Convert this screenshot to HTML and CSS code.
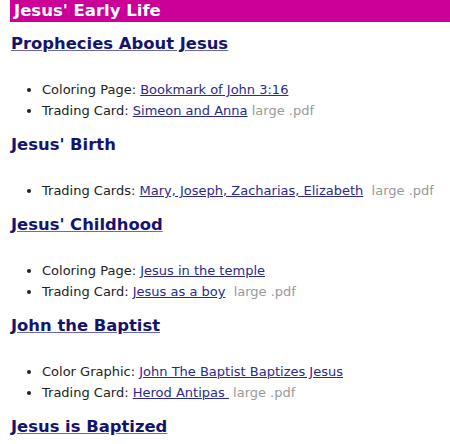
FILE: index.html
```html
<!DOCTYPE html>
<html>
<head>
<meta charset="utf-8">
<link rel="stylesheet" href="styles.css">
</head>
<body>
<div class="page">
  <div class="banner">Jesus' Early Life</div>

  <h2 class="topic first"><a href="#">Prophecies About Jesus</a></h2>
  <ul class="items">
    <li>Coloring Page: <a href="#">Bookmark of John 3:16</a></li>
    <li>Trading Card: <a href="#">Simeon and Anna</a> <span class="note">large .pdf</span></li>
  </ul>

  <h2 class="topic">Jesus' Birth</h2>
  <ul class="items">
    <li>Trading Cards: <a href="#">Mary, Joseph, Zacharias, Elizabeth</a> &nbsp;<span class="note">large .pdf</span></li>
  </ul>

  <h2 class="topic"><a href="#">Jesus' Childhood</a></h2>
  <ul class="items">
    <li>Coloring Page: <a href="#">Jesus in the temple</a></li>
    <li>Trading Card: <a href="#">Jesus as a boy</a> &nbsp;<span class="note">large .pdf</span></li>
  </ul>

  <h2 class="topic"><a href="#">John the Baptist</a></h2>
  <ul class="items">
    <li>Color Graphic: <a href="#">John The Baptist Baptizes Jesus</a></li>
    <li>Trading Card: <a href="#">Herod Antipas&nbsp;</a> <span class="note">large .pdf</span></li>
  </ul>

  <h2 class="topic"><a href="#">Jesus is Baptized</a></h2>
</div>
</body>
</html>
```

FILE: styles.css
```css
html, body {
  margin: 0;
  padding: 0;
  background: #fff;
}
.page {
  padding-left: 10px;
  font-family: "DejaVu Sans", Verdana, sans-serif;
  font-size: 13px;
  color: #222;
}
.banner {
  background: #cc0099;
  color: #fff;
  font-weight: bold;
  font-size: 16.5px;
  line-height: 22px;
  height: 22px;
  padding-left: 4px;
}
.topic {
  margin: 14px 0 0 1px;
  font-size: 16.4px;
  font-weight: bold;
  color: #14146e;
  line-height: 20px;
}
.topic.first {
  margin-top: 12px;
}
.topic a {
  color: #14146e;
  text-decoration-color: #6a6ab0;
}
.items {
  margin: 25px 0 0 0;
  padding-left: 32px;
  line-height: 21px;
}
.items a {
  color: #2a2a90;
}
.note {
  color: #999;
}
```
